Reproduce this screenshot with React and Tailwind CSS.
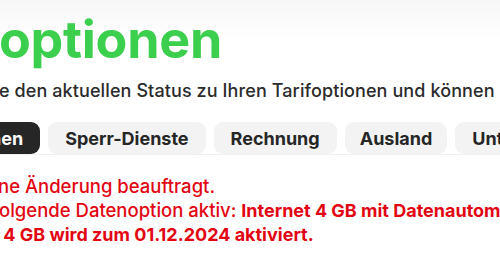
export default function App() {
  const font = { fontFamily: 'Inter, "Noto Sans", sans-serif' };
  const tabs = [
    { t: "Sperr-Dienste", c: "px-[17px]" },
    { t: "Rechnung", c: "px-[17px]" },
    { t: "Ausland", c: "px-[15px]" },
    { t: "Unterstützung", c: "px-[17px]" },
  ];
  return (
    <div className="w-[500px] h-[267px] overflow-hidden bg-white relative" style={font}>
      <div className="bg-gradient-to-b from-[#f7f7f7] to-white h-[40px] absolute inset-x-0 top-0" />
      <div className="relative pt-[10px]">
        <h1 className="text-[52px] leading-[60px] font-bold text-[#3ccf4e] tracking-[-0.3px] -ml-[1px] whitespace-nowrap">
          optionen
        </h1>
        <p className="mt-[9px] text-[18px] leading-[24px] font-medium text-[#2b2b2b] whitespace-nowrap -ml-[1px] tracking-[0.1px]">
          e den aktuellen Status zu Ihren Tarifoptionen und können
        </p>
        <div className="mt-[19px] flex gap-[8px] whitespace-nowrap border-b border-[#f0f0f0] w-[520px]">
          <div className="-ml-[20px] h-[32px] pl-[10px] pr-[17px] rounded-[9px] bg-[#262626] text-white text-[18px] font-bold flex items-center">
            nen
          </div>
          {tabs.map(({ t, c }) => (
            <div
              key={t}
              className={`h-[32px] ${c} rounded-[9px] bg-[#f3f3f3] text-[#262626] text-[18px] font-bold flex items-center`}
            >
              {t}
            </div>
          ))}
        </div>
        <div className="mt-[19px] text-[18.5px] leading-[24px] font-medium text-[#e20613] whitespace-nowrap">
          <p className="-ml-[2px]">ne Änderung beauftragt.</p>
          <p className="-ml-[1px]">
            olgende Datenoption aktiv: <span className="font-bold text-[18px]">Internet 4 GB mit Datenautomatik.</span>
          </p>
          <p className="font-bold text-[18px] -ml-[1px]">&nbsp;4 GB wird zum 01.12.2024 aktiviert.</p>
        </div>
      </div>
    </div>
  );
}
